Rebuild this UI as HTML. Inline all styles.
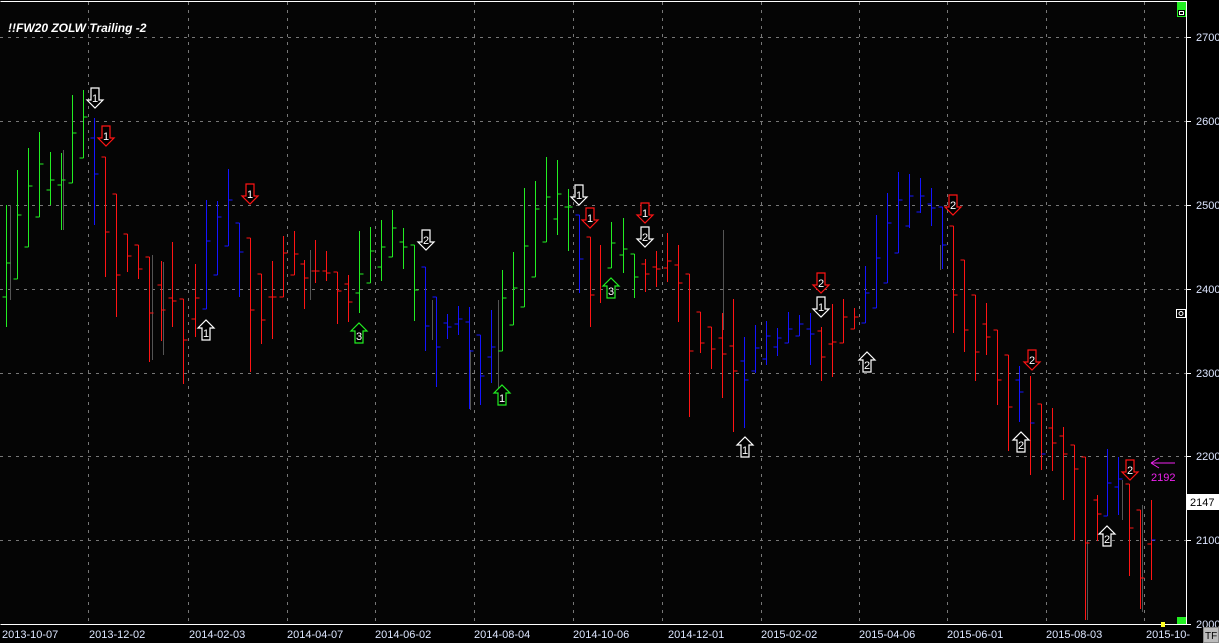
<!DOCTYPE html>
<html><head><meta charset="utf-8"><style>
html,body{margin:0;padding:0;background:#000;width:1219px;height:643px;overflow:hidden}
svg{display:block}
text{font-family:"Liberation Sans",sans-serif}
</style></head><body>
<svg width="1219" height="643" viewBox="0 0 1219 643" xmlns="http://www.w3.org/2000/svg">
<rect width="1219" height="643" fill="#000"/>
<rect x="0" y="0" width="1187" height="625" fill="#050505"/>
<g stroke="#777" stroke-width="1" stroke-dasharray="3,5" shape-rendering="crispEdges">
<path d="M0 37.5H1186M0 121.5H1186M0 205.5H1186M0 289.5H1186M0 373.5H1186M0 456.5H1186M0 540.5H1186"/>
<path d="M88.5 2V624M188.5 2V624M287.5 2V624M375.5 2V624M474.5 2V624M573.5 2V624M662.5 2V624M761.5 2V624M859.5 2V624M947.5 2V624M1046.5 2V624M1144.5 2V624"/>
</g>
<g fill="none" stroke-width="1" shape-rendering="crispEdges" transform="translate(0.5,0)">
<path stroke="#555" d="M63 150V230M152 255V360M163 262V355M432 300V340M470 350V410M498 300V395M723 230V330M1087 540V620M1142 505V612M10 205V300M310 250V300M940 245V270M1122 480V520"/>
<path stroke="#22ee22" d="M6 205V327M2 297H6M6 263H10M17 170V279M13 279H17M17 215H21M28 148V247M24 247H28M28 186H32M39 132V217M35 217H39M39 164H43M50 152V205M46 190H50M50 180H54M61 153V230M57 185H61M61 180H65M72 95V183M68 183H72M72 133H76M83 90V158M79 158H83M83 117H87M359 231V313M355 293H359M359 274H363M370 227V283M366 283H370M370 251H374M381 220V281M377 267H381M381 247H385M392 210V257M388 257H392M392 228H396M403 228V269M399 242H403M403 247H407M414 245V321M410 245H414M414 290H418M502 270V351M498 351H502M502 298H506M513 252V325M509 325H513M513 288H517M524 188V307M520 307H524M524 246H528M535 181V277M531 277H535M535 209H539M546 157V242M542 242H546M546 197H550M557 160V235M553 219H557M557 194H561M568 189V251M564 207H568M568 207H572M611 222V268M607 268H611M611 243H615M623 218V273M619 255H623M623 249H627M634 254V298M630 254H634M634 277H638"/>
<path stroke="#1414ff" d="M94 118V225M90 138H94M94 174H98M206 200V309M202 309H206M206 241H210M217 201V275M213 275H217M217 217H221M228 169V246M224 246H228M228 200H232M239 223V297M235 223H239M239 252H243M425 267V351M421 267H425M425 326H429M436 297V387M432 297H436M436 347H440M447 314V339M443 323H447M447 327H451M458 306V335M454 324H458M458 319H462M469 307V409M465 322H469M469 351H473M480 335V405M476 335H480M480 376H484M491 310V383M487 357H491M491 347H495M579 215V293M575 215H579M579 259H583M744 337V428M740 361H744M744 380H748M755 325V373M751 371H755M755 348H759M766 321V365M762 359H766M766 336H770M777 328V356M773 347H777M777 338H781M788 312V343M784 343H788M788 329H792M799 315V336M795 336H799M799 324H803M810 313V365M806 329H810M810 334H814M865 266V323M861 323H865M865 293H869M876 215V308M872 308H876M876 258H880M887 193V283M883 283H887M887 223H891M898 172V253M894 253H898M898 200H902M909 174V228M905 226H909M909 196H913M920 178V213M916 212H920M920 196H924M931 188V226M927 204H931M931 208H935M942 207V269M938 207H942M942 245H946M1019 366V422M1015 380H1019M1019 392H1023M1107 449V516M1103 516H1107M1107 483H1111M1118 457V515M1114 487H1118M1118 479H1122"/>
<path stroke="#ff1414" d="M105 157V277M101 157H105M105 232H109M116 194V317M112 194H116M116 275H120M127 234V272M123 234H127M127 256H131M138 245V279M134 245H138M138 269H142M149 257V362M145 257H149M149 313H153M161 261V341M157 285H161M161 310H165M172 242V327M168 298H172M172 301H176M183 299V384M179 299H183M183 340H187M195 264V337M191 319H195M195 298H199M250 238V372M246 238H250M250 310H254M261 274V344M257 274H261M261 320H265M272 261V339M268 297H272M272 297H276M283 236V297M279 297H283M283 253H287M294 231V275M290 275H294M294 254H298M304 260V309M300 264H304M304 278H308M315 240V283M311 271H315M315 271H319M326 251V281M322 271H326M326 273H330M337 272V324M333 272H337M337 291H341M348 275V322M344 284H348M348 302H352M590 237V327M586 237H590M590 295H594M600 245V303M645 259V292M641 264H645M645 274H649M656 251V287M652 267H656M656 269H660M667 233V282M663 268H667M667 261H671M678 245V322M674 265H678M678 283H682M689 274V417M685 274H689M689 351H693M700 312V353M696 312H700M700 343H704M711 327V369M707 327H711M711 349H715M722 313V398M718 338H722M722 354H726M733 299V432M729 346H733M733 371H737M821 327V381M817 331H821M821 357H825M832 304V377M828 344H832M832 342H836M843 299V343M839 343H843M843 317H847M854 308V329M850 329H854M854 317H858M953 226V333M949 226H953M953 295H957M964 260V352M960 260H964M964 330H968M975 295V381M971 295H975M975 352H979M986 303V355M982 324H986M986 337H990M997 330V405M993 330H997M997 380H1001M1008 355V451M1004 355H1008M1008 407H1012M1030 376V475M1041 404V470M1037 404H1041M1052 408V471M1048 428H1052M1052 443H1056M1063 427V500M1059 436H1063M1063 454H1067M1074 445V540M1070 445H1074M1074 469H1078M1085 457V620M1081 457H1085M1085 543H1089M1097 495V541M1093 500H1097M1097 514H1101M1129 484V576M1125 484H1129M1129 528H1133M1140 510V609M1136 510H1140M1140 578H1144M1151 500V580M1147 544H1151"/>
<path stroke="#1414ff" d="M1030 423H1034M1041 454H1045M1151 540H1155"/>
</g>
<g fill="#000" stroke-width="1.2">
<path stroke="#fff" d="M91 88H99V100H103L95 108L87 100H91Z"/>
<path stroke="#ff1414" d="M102 126H110V138H114L106 146L98 138H102Z"/>
<path stroke="#ff1414" d="M246 184H254V196H258L250 204L242 196H246Z"/>
<path stroke="#fff" d="M202 340H210V328H214L206 320L198 328H202Z"/>
<path stroke="#22ee22" d="M355 343H363V331H367L359 323L351 331H355Z"/>
<path stroke="#fff" d="M422 230H430V242H434L426 250L418 242H422Z"/>
<path stroke="#22ee22" d="M498 405H506V393H510L502 385L494 393H498Z"/>
<path stroke="#fff" d="M575 185H583V197H587L579 205L571 197H575Z"/>
<path stroke="#ff1414" d="M586 208H594V220H598L590 228L582 220H586Z"/>
<path stroke="#22ee22" d="M607 298H615V286H619L611 278L603 286H607Z"/>
<path stroke="#ff1414" d="M641 203H649V215H653L645 223L637 215H641Z"/>
<path stroke="#fff" d="M641 227H649V239H653L645 247L637 239H641Z"/>
<path stroke="#fff" d="M741 457H749V445H753L745 437L737 445H741Z"/>
<path stroke="#ff1414" d="M817 273H825V285H829L821 293L813 285H817Z"/>
<path stroke="#fff" d="M817 297H825V309H829L821 317L813 309H817Z"/>
<path stroke="#fff" d="M863 372H871V360H875L867 352L859 360H863Z"/>
<path stroke="#ff1414" d="M949 195H957V207H961L953 215L945 207H949Z"/>
<path stroke="#ff1414" d="M1028 350H1036V362H1040L1032 370L1024 362H1028Z"/>
<path stroke="#fff" d="M1017 452H1025V440H1029L1021 432L1013 440H1017Z"/>
<path stroke="#fff" d="M1103 546H1111V534H1115L1107 526L1099 534H1103Z"/>
<path stroke="#ff1414" d="M1126 460H1134V472H1138L1130 480L1122 472H1126Z"/>
</g>
<g fill="#fff" font-size="11" text-anchor="middle">
<text x="95" y="102">1</text><text x="106" y="140">1</text><text x="250" y="198">1</text>
<text x="206" y="337">1</text><text x="359" y="340">3</text><text x="426" y="244">2</text>
<text x="502" y="402">1</text><text x="579" y="199">1</text><text x="590" y="222">1</text>
<text x="611" y="295">3</text><text x="645" y="217">1</text><text x="645" y="241">2</text>
<text x="745" y="454">1</text><text x="821" y="287">2</text><text x="821" y="311">1</text>
<text x="867" y="369">2</text><text x="953" y="209">2</text><text x="1032" y="364">2</text>
<text x="1021" y="449">2</text><text x="1107" y="543">2</text><text x="1130" y="474">2</text>
</g>
<g stroke="#ee22ee" stroke-width="1" fill="none"><path d="M1151 463H1175M1151 463L1159 458M1151 463L1159 468"/></g>
<text x="1151" y="481" fill="#ee22ee" font-size="11" font-family="Liberation Mono,monospace">2192</text>
<text x="8" y="32" fill="#fff" font-size="12" font-weight="bold" font-style="italic">!!FW20 ZOLW Trailing -2</text>
<g stroke="#fff" stroke-width="1" fill="none" shape-rendering="crispEdges">
<path d="M0.5 1.5H1186.5V624.5H0.5"/>
<path d="M1187 37.5H1191M1187 121.5H1191M1187 205.5H1191M1187 289.5H1191M1187 373.5H1191M1187 456.5H1191M1187 540.5H1191M1187 624.5H1191"/>
</g>
<rect x="1177" y="2" width="9" height="7" fill="#22ee22"/>
<rect x="1177.5" y="9.5" width="8" height="7" fill="#000" stroke="#22ee22"/>
<rect x="1179.5" y="11.5" width="4" height="3" fill="none" stroke="#fff"/>
<rect x="1177" y="617" width="9" height="7" fill="#22ee22"/>
<rect x="1161" y="622" width="4" height="5" fill="#ffff22"/>
<rect x="1176.5" y="309.5" width="9" height="8" fill="#000" stroke="#fff"/>
<circle cx="1181" cy="313.5" r="2" fill="none" stroke="#fff"/>
<g fill="#dde6ff" font-size="11">
<text x="1196" y="41">2700</text><text x="1196" y="125">2600</text><text x="1196" y="209">2500</text>
<text x="1196" y="293">2400</text><text x="1196" y="377">2300</text><text x="1196" y="460">2200</text>
<text x="1196" y="544">2100</text><text x="1196" y="628">2000</text>
</g>
<rect x="1187" y="494" width="32" height="16" fill="#fff"/>
<text x="1190" y="506" fill="#000" font-size="11">2147</text>
<g fill="#dde6ff" font-size="11">
<text x="2" y="638">2013-10-07</text><text x="89" y="638">2013-12-02</text><text x="189" y="638">2014-02-03</text>
<text x="287" y="638">2014-04-07</text><text x="375" y="638">2014-06-02</text><text x="474" y="638">2014-08-04</text>
<text x="573" y="638">2014-10-06</text><text x="668" y="638">2014-12-01</text><text x="761" y="638">2015-02-02</text>
<text x="859" y="638">2015-04-06</text><text x="947" y="638">2015-06-01</text><text x="1046" y="638">2015-08-03</text>
<text x="1146" y="638">2015-10-</text>
</g>
<rect x="1203.5" y="627.5" width="15" height="15" fill="#bbb" stroke="#888"/>
<text x="1205" y="639" fill="#000" font-size="10">TF</text>
</svg>
</body></html>
